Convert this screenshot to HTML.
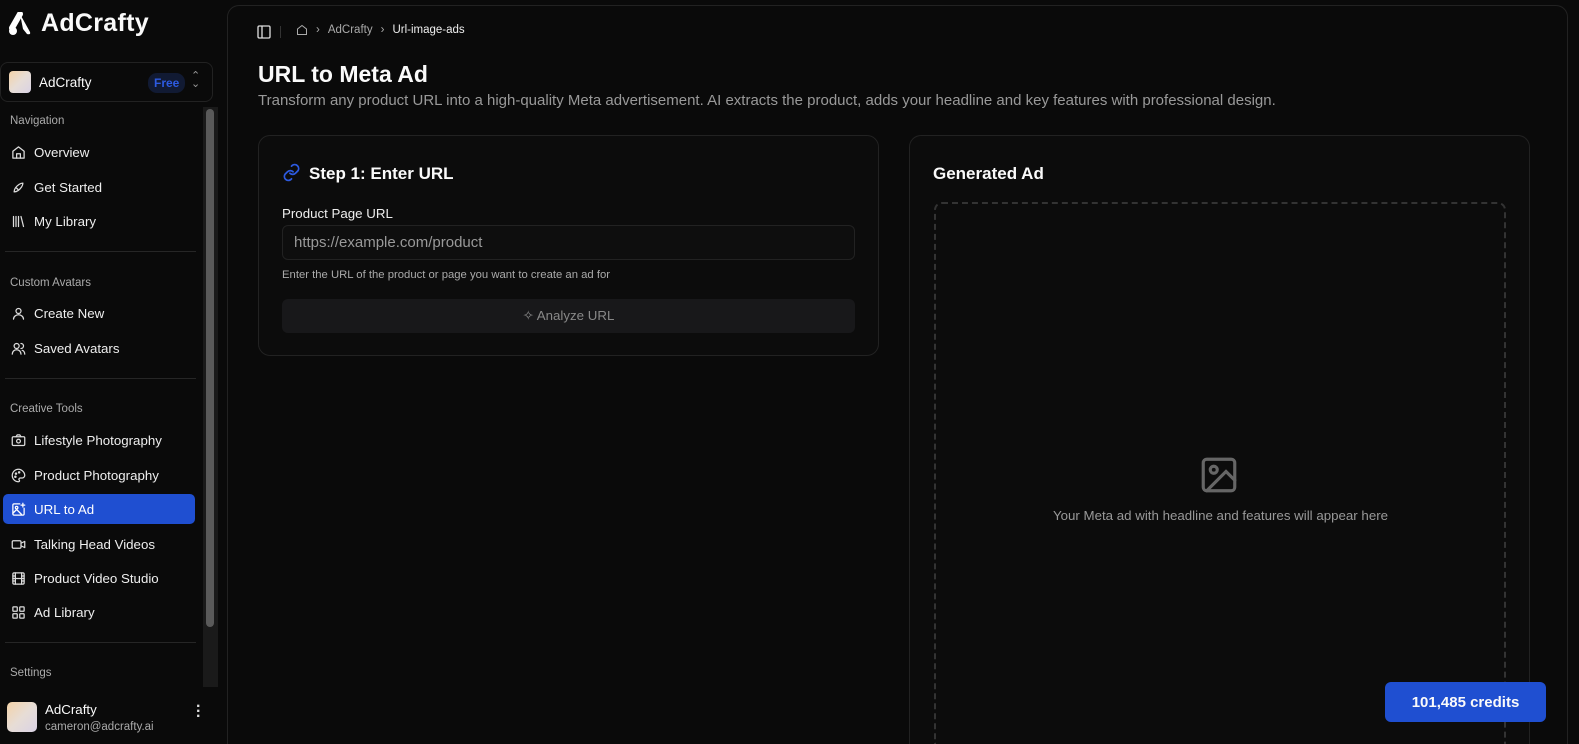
<!DOCTYPE html>
<html style="overflow:hidden;width:1579px;height:744px"><head><meta charset="utf-8"><style>
*{box-sizing:border-box;margin:0;padding:0}
body{width:1579px;height:744px;overflow:hidden;background:#0a0a0a;font-family:"Liberation Sans",sans-serif;color:#fafafa;position:relative}
.sb{position:absolute;left:0;top:0;width:218px;height:744px}
.logo{position:absolute;left:8px;top:9px;font-size:25px;font-weight:bold;letter-spacing:0.3px;display:flex;align-items:center;gap:7px}
.team{position:absolute;left:0;top:62px;width:213px;height:40px;border:1px solid #222;border-radius:8px;display:flex;align-items:center;padding-left:8px;font-size:13.5px}
.av{width:22px;height:22px;border-radius:4px;background:linear-gradient(135deg,#f3d2a8,#e7ddd6,#d9d2e4)}
.free{position:absolute;left:147px;top:10px;background:#111a33;color:#2d5ae0;font-size:12px;font-weight:bold;padding:3px 6px;border-radius:9px}
.sec{position:absolute;left:10px;font-size:11.5px;color:#aaa}
.it{position:absolute;left:3px;width:192px;height:30px;display:flex;align-items:center;padding-left:8px;font-size:13.3px;color:#eee;border-radius:5px}
.it svg{width:15px;height:15px;margin-right:8px;stroke:#ddd;fill:none;stroke-width:2;stroke-linecap:round;stroke-linejoin:round}
.act{background:#1f4fd1;color:#fff}
.hr{position:absolute;left:5px;width:191px;height:1px;background:#262626}
.scr{position:absolute;left:203px;top:107px;width:15px;height:580px;background:#1a1a1a}
.scr div{position:absolute;left:3px;top:2px;width:8px;height:518px;background:#5a5a5a;border-radius:4px}
.main{position:absolute;left:227px;top:5px;width:1341px;height:739px;border:1px solid #222;border-bottom:none;border-radius:12px 12px 0 0;background:#0a0a0a;overflow:hidden}
.card{position:absolute;border:1px solid #222;border-radius:12px;background:#0c0c0c}
</style></head><body>
<div class="sb">
 <div class="logo"><svg width="26" height="24" viewBox="0 0 26 24"><path d="M12 2 L22 20 Q23 23 19 22 L15 17 Z" fill="#fff"/><path d="M12 2 L4 16" stroke="#fff" stroke-width="6" stroke-linecap="round"/><circle cx="5" cy="19" r="4" fill="#fff"/></svg>AdCrafty</div>
 <div class="team"><div class="av"></div><span style="margin-left:8px">AdCrafty</span><span class="free">Free</span><span style="position:absolute;left:190px;top:9px;color:#999;font-size:11px;line-height:8px">⌃<br>⌄</span></div>
 <div class="sec" style="top:115px">Navigation</div>
 <div class="it" style="top:137px"><svg viewBox="0 0 24 24"><path d="M3 10l9-7 9 7v11H3z"/><path d="M9 21v-7h6v7"/></svg>Overview</div>
 <div class="it" style="top:172px"><svg viewBox="0 0 24 24"><path d="M5 19c0-3 2-8 8-12 3-2 6-2 6-2s0 3-2 6c-4 6-9 8-12 8z"/><path d="M9 13l2 2"/></svg>Get Started</div>
 <div class="it" style="top:206px"><svg viewBox="0 0 24 24"><path d="M4 4v16M8 4v16M12 4v16M16 4l4 16"/></svg>My Library</div>
 <div class="hr" style="top:251px"></div>
 <div class="sec" style="top:277px">Custom Avatars</div>
 <div class="it" style="top:298px"><svg viewBox="0 0 24 24"><circle cx="12" cy="8" r="4"/><path d="M4 21c0-4 4-7 8-7s8 3 8 7"/></svg>Create New</div>
 <div class="it" style="top:333px"><svg viewBox="0 0 24 24"><circle cx="9" cy="8" r="4"/><path d="M2 21c0-4 3-7 7-7s7 3 7 7M16 4a4 4 0 010 8M22 21c0-3-2-6-4-6"/></svg>Saved Avatars</div>
 <div class="hr" style="top:378px"></div>
 <div class="sec" style="top:403px">Creative Tools</div>
 <div class="it" style="top:425px"><svg viewBox="0 0 24 24"><rect x="2" y="6" width="20" height="14" rx="2"/><circle cx="12" cy="13" r="3"/><path d="M8 6l2-3h4l2 3"/></svg>Lifestyle Photography</div>
 <div class="it" style="top:460px"><svg viewBox="0 0 24 24"><path d="M12 2a10 10 0 000 20c2 0 2-2 1-3s0-3 2-3h3c2 0 4-2 4-4 0-5-5-10-10-10z"/><circle cx="8" cy="9" r="1"/><circle cx="13" cy="7" r="1"/><circle cx="7" cy="14" r="1"/></svg>Product Photography</div>
 <div class="it act" style="top:494px"><svg viewBox="0 0 24 24" style="stroke:#fff"><path d="M14 3H5a2 2 0 00-2 2v14a2 2 0 002 2h14a2 2 0 002-2v-9"/><path d="M3 18l6-6 8 8"/><circle cx="9" cy="9" r="2"/><path d="M19 2v6M16 5h6"/></svg>URL to Ad</div>
 <div class="it" style="top:529px"><svg viewBox="0 0 24 24"><rect x="2" y="6" width="14" height="12" rx="2"/><path d="M16 10l6-3v10l-6-3"/></svg>Talking Head Videos</div>
 <div class="it" style="top:563px"><svg viewBox="0 0 24 24"><rect x="3" y="3" width="18" height="18" rx="2"/><path d="M7 3v18M17 3v18M3 8h4M3 12h18M3 16h4M17 8h4M17 16h4"/></svg>Product Video Studio</div>
 <div class="it" style="top:597px"><svg viewBox="0 0 24 24"><rect x="3" y="3" width="7" height="7" rx="1"/><rect x="14" y="3" width="7" height="7" rx="1"/><rect x="3" y="14" width="7" height="7" rx="1"/><rect x="14" y="14" width="7" height="7" rx="1"/></svg>Ad Library</div>
 <div class="hr" style="top:642px"></div>
 <div class="sec" style="top:667px">Settings</div>
 <div class="av" style="position:absolute;left:7px;top:702px;width:30px;height:30px;border-radius:5px"></div>
 <div style="position:absolute;left:45px;top:702px;font-size:13.3px">AdCrafty</div>
 <div style="position:absolute;left:45px;top:721px;font-size:11.5px;color:#aaa">cameron@adcrafty.ai</div>
 <div style="position:absolute;left:196px;top:704px;font-size:16px;font-weight:bold;line-height:5px;color:#ddd">·<br>·<br>·</div>
</div>
<div class="scr"><div></div></div>
<div class="main">
 <svg style="position:absolute;left:28px;top:18px" width="16" height="16" viewBox="0 0 24 24" fill="none" stroke="#ddd" stroke-width="2"><rect x="3" y="3" width="18" height="18" rx="2"/><path d="M9 3v18"/></svg>
 <div style="position:absolute;left:52px;top:20px;width:1px;height:12px;background:#333"></div>
 <div style="position:absolute;left:68px;top:18px;font-size:11.5px;color:#aaa;display:flex;align-items:center;gap:8px"><svg width="12" height="12" viewBox="0 0 24 24" fill="none" stroke="#aaa" stroke-width="2"><path d="M3 10l9-7 9 7v11H3z"/></svg>›<span>AdCrafty</span>›<span style="color:#eee">Url-image-ads</span></div>
 <div style="position:absolute;left:30px;top:55px;font-size:23px;font-weight:bold">URL to Meta Ad</div>
 <div style="position:absolute;left:30px;top:86px;font-size:15px;color:#999">Transform any product URL into a high-quality Meta advertisement. AI extracts the product, adds your headline and key features with professional design.</div>
 <div class="card" style="left:30px;top:129px;width:621px;height:221px">
  <svg style="position:absolute;left:23px;top:27px" width="19" height="19" viewBox="0 0 24 24" fill="none" stroke="#2d5ae0" stroke-width="2.2" stroke-linecap="round"><path d="M10 13a5 5 0 007 0l3-3a5 5 0 00-7-7l-1 1"/><path d="M14 11a5 5 0 00-7 0l-3 3a5 5 0 007 7l1-1"/></svg>
  <div style="position:absolute;left:50px;top:28px;font-size:17px;font-weight:bold">Step 1: Enter URL</div>
  <div style="position:absolute;left:23px;top:70px;font-size:13.3px;color:#eee">Product Page URL</div>
  <div style="position:absolute;left:23px;top:89px;width:573px;height:35px;border:1px solid #222;border-radius:6px;background:#0e0e0e;padding:8px 11px;font-size:15px;color:#999">https://example.com/product</div>
  <div style="position:absolute;left:23px;top:133px;font-size:11.3px;color:#aaa">Enter the URL of the product or page you want to create an ad for</div>
  <div style="position:absolute;left:23px;top:163px;width:573px;height:34px;border-radius:6px;background:#18181a;display:flex;align-items:center;justify-content:center;font-size:13.3px;color:#888;gap:6px">✧ Analyze URL</div>
 </div>
 <div class="card" style="left:681px;top:129px;width:621px;height:610px;border-bottom:none;border-radius:12px 12px 0 0">
  <div style="position:absolute;left:23px;top:28px;font-size:17px;font-weight:bold">Generated Ad</div>
  <div style="position:absolute;left:24px;top:66px;width:572px;height:543px;border:2px dashed #333;border-bottom:none;border-radius:8px 8px 0 0"></div>
  <svg style="position:absolute;left:288px;top:318px" width="42" height="42" viewBox="0 0 24 24" fill="none" stroke="#666" stroke-width="1.8" stroke-linecap="round"><rect x="3" y="3" width="18" height="18" rx="2"/><circle cx="9" cy="9" r="2"/><path d="M21 15l-5-5L5 21"/></svg>
  <div style="position:absolute;left:0;width:621px;top:372px;text-align:center;font-size:13.3px;color:#999">Your Meta ad with headline and features will appear here</div>
 </div>
</div>
<div style="position:absolute;left:1385px;top:682px;width:161px;height:40px;background:#1f4fd1;border-radius:6px;font-size:15px;font-weight:bold;display:flex;align-items:center;justify-content:center">101,485 credits</div>
</body></html>
